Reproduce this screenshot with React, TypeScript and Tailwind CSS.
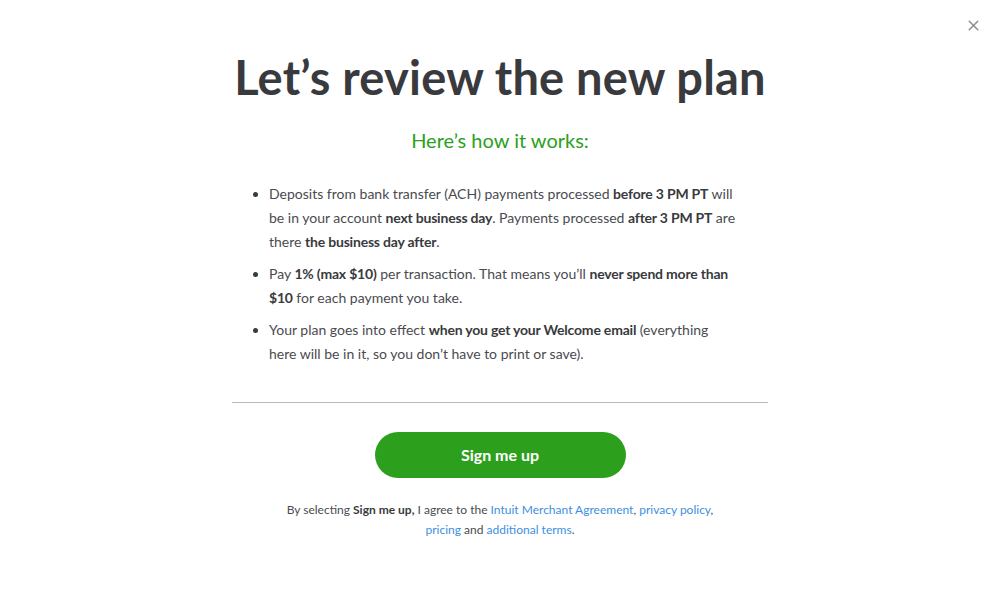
import { X } from "lucide-react";

const bullets = [
  [
    ["Deposits from bank transfer (ACH) payments processed ", false],
    ["before 3 PM PT", true],
    [" will be in your account ", false],
    ["next business day", true],
    [". Payments processed ", false],
    ["after 3 PM PT", true],
    [" are there ", false],
    ["the business day after", true],
    [".", false],
  ],
  [
    ["Pay ", false],
    ["1% (max $10)", true],
    [" per transaction. That means you\u2019ll ", false],
    ["never spend more than $10", true],
    [" for each payment you take.", false],
  ],
  [
    ["Your plan goes into effect ", false],
    ["when you get your Welcome email", true],
    [" (everything here will be in it, so you don\u2019t have to print or save).", false],
  ],
] as const;

export default function App() {
  return (
    <div className="relative h-[610px] w-[1000px] bg-white font-['Lato','Noto_Sans',sans-serif] text-[#393a3d]">
      <button
        type="button"
        className="absolute right-[18px] top-[17px] text-[#8d9096]"
        aria-label="Close"
      >
        <X size={17} strokeWidth={2.2} />
      </button>

      <div className="mx-auto flex w-[536px] flex-col items-center pt-[48px]">
        <h1 className="text-[47px] font-bold leading-[58px] tracking-[0.2px]">
          Let&rsquo;s review the new plan
        </h1>
        <p className="mt-[20px] text-[20px] leading-[28px] text-[#2ca01c]">
          Here&rsquo;s how it works:
        </p>

        <ul className="mt-[28px] w-full list-disc pl-[37px] pr-[32px] text-[14px] leading-[24px] text-[#4a4b4f] marker:text-[#393a3d]">
          {bullets.map((parts, i) => (
            <li key={i} className={i > 0 ? "mt-[8px]" : ""}>
              {parts.map(([text, bold], j) =>
                bold ? (
                  <strong key={j} className="font-bold tracking-[-0.2px] text-[#393a3d]">
                    {text}
                  </strong>
                ) : (
                  <span key={j}>{text}</span>
                ),
              )}
            </li>
          ))}
        </ul>

        <div className="mt-[36px] h-px w-full bg-[#b9babd]" />

        <button
          type="button"
          className="mt-[29px] h-[46px] w-[251px] rounded-full bg-[#2ca01c] text-[16px] font-bold text-white"
        >
          Sign me up
        </button>

        <p className="mt-[22px] w-full text-center text-[12px] leading-[20px] text-[#4a4b4f]">
          By selecting <strong className="font-bold text-[#393a3d]">Sign me up,</strong> I agree to the{" "}
          <a className="text-[#3d8fe0]">Intuit Merchant Agreement</a>,{" "}
          <a className="text-[#3d8fe0]">privacy policy</a>,
          <br />
          <a className="text-[#3d8fe0]">pricing</a> and{" "}
          <a className="text-[#3d8fe0]">additional terms</a>.
        </p>
      </div>
    </div>
  );
}
